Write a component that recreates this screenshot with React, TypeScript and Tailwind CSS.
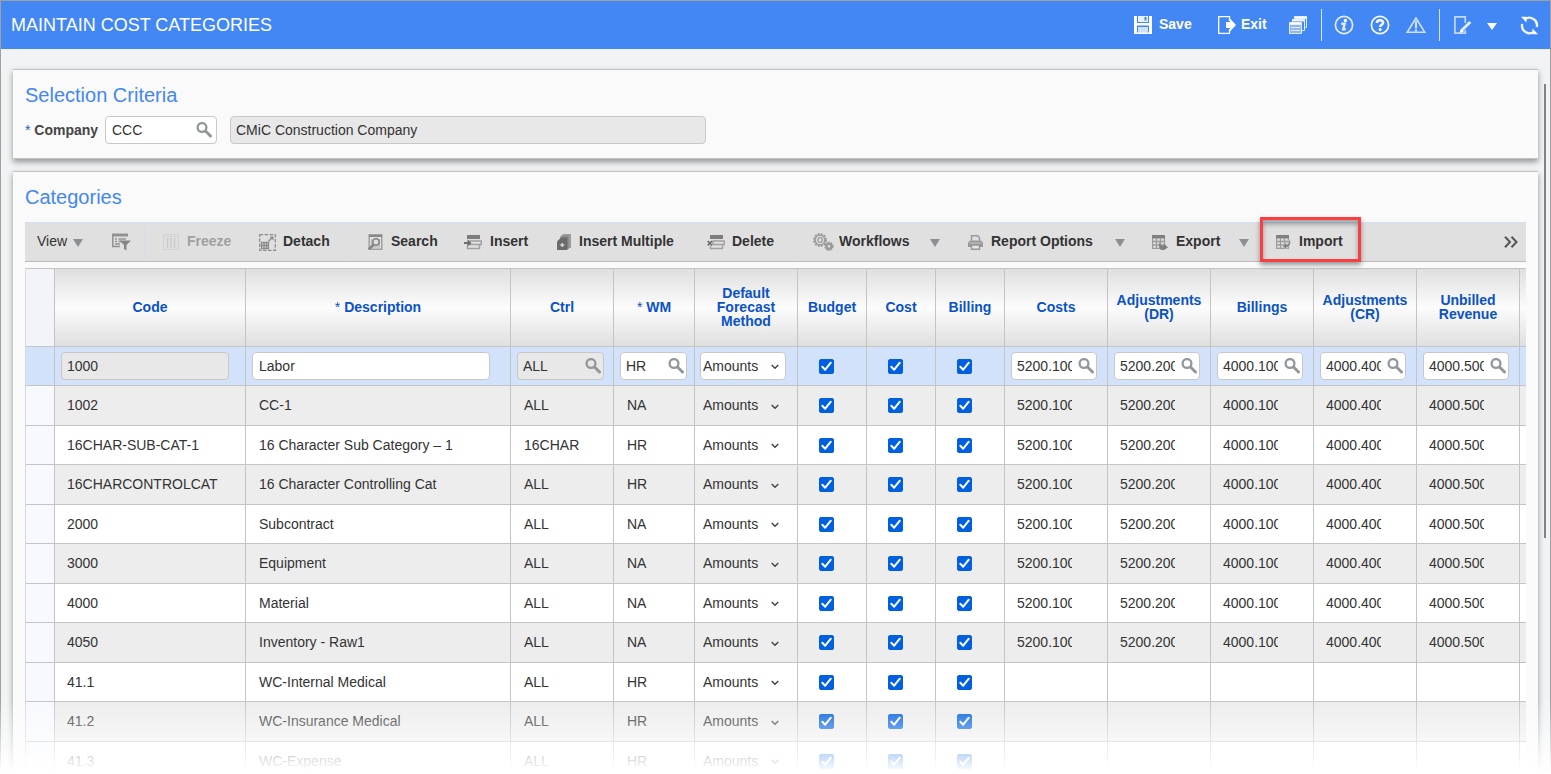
import type { ReactNode } from "react";
import clsx from "clsx";

type Row = {
  code: string;
  description: string;
  ctrl: string;
  wm: string;
  accounts: string[];
};

const ACCOUNTS = ["5200.100", "5200.200", "4000.100", "4000.400", "4000.500"];
const EMPTY = ["", "", "", "", ""];

const rows: Row[] = [
  { code: "1000", description: "Labor", ctrl: "ALL", wm: "HR", accounts: ACCOUNTS },
  { code: "1002", description: "CC-1", ctrl: "ALL", wm: "NA", accounts: ACCOUNTS },
  { code: "16CHAR-SUB-CAT-1", description: "16 Character Sub Category – 1", ctrl: "16CHAR", wm: "HR", accounts: ACCOUNTS },
  { code: "16CHARCONTROLCAT", description: "16 Character Controlling Cat", ctrl: "ALL", wm: "HR", accounts: ACCOUNTS },
  { code: "2000", description: "Subcontract", ctrl: "ALL", wm: "NA", accounts: ACCOUNTS },
  { code: "3000", description: "Equipment", ctrl: "ALL", wm: "NA", accounts: ACCOUNTS },
  { code: "4000", description: "Material", ctrl: "ALL", wm: "NA", accounts: ACCOUNTS },
  { code: "4050", description: "Inventory - Raw1", ctrl: "ALL", wm: "NA", accounts: ACCOUNTS },
  { code: "41.1", description: "WC-Internal Medical", ctrl: "ALL", wm: "HR", accounts: EMPTY },
  { code: "41.2", description: "WC-Insurance Medical", ctrl: "ALL", wm: "HR", accounts: EMPTY },
  { code: "41.3", description: "WC-Expense", ctrl: "ALL", wm: "HR", accounts: EMPTY },
];

const columns = [
  { label: "Code", width: "w-[191px]" },
  { label: "Description", width: "w-[265px]", required: true },
  { label: "Ctrl", width: "w-[103px]" },
  { label: "WM", width: "w-[81px]", required: true },
  { label: "Default Forecast Method", width: "w-[103px]" },
  { label: "Budget", width: "w-[69px]" },
  { label: "Cost", width: "w-[69px]" },
  { label: "Billing", width: "w-[69px]" },
  { label: "Costs", width: "w-[103px]" },
  { label: "Adjustments (DR)", width: "w-[103px]" },
  { label: "Billings", width: "w-[103px]" },
  { label: "Adjustments (CR)", width: "w-[103px]" },
  { label: "Unbilled Revenue", width: "w-[103px]" },
];

function SearchIcon() {
  return (
    <svg width="16" height="16" viewBox="0 0 16 16" fill="none" stroke="#92979b">
      <circle cx="6" cy="5.5" r="4.4" strokeWidth="2.3" />
      <path d="M9.5 9l5 5" strokeWidth="3" strokeLinecap="round" />
    </svg>
  );
}

function DownArrow() {
  return (
    <svg width="10" height="8" viewBox="0 0 10 8">
      <path d="M0 0h10L5 8z" fill="#8b9095" />
    </svg>
  );
}

/* Header icons */

function SaveIcon() {
  return (
    <svg width="18" height="18" viewBox="0 0 18 18">
      <path fill="#fff" d="M0 0h3v7h12V0h3v18h-3V9.500H3V18H0z" />
      <path fill="#e9f1fe" d="M4 0h10v6H4z" />
      <path fill="#4387f4" d="M10.500 1h2v3.500h-2z" />
      <path fill="#cfe0fc" d="M4 11h10v6H4z" />
      <path fill="#fff" d="M3 16.500h12V18H3z" />
    </svg>
  );
}

function ExitIcon() {
  return (
    <svg width="18" height="18" viewBox="0 0 18 18">
      <path d="M11.500 5V.7H.7v16.600h10.800V13" fill="none" stroke="#fff" strokeWidth="1.300" />
      <path d="M8 6h4V2.500L18 9l-6 6.500V12H8z" fill="#fff" />
    </svg>
  );
}

function WindowsIcon() {
  return (
    <svg width="18" height="18" viewBox="0 0 18 18">
      <g stroke="#e3edfe" fill="#4387f4">
        <path d="M5.500.500h12v11h-12z" />
        <path fill="#fff" d="M5.500.500h12v2h-12z" />
        <path d="M3.500 3.500h12v11h-12z" />
        <path fill="#fff" d="M3.500 3.500h12v1.500h-12z" />
        <path d="M.5 7.500h12v10H.5z" fill="#8db7f9" />
        <path fill="#fff" d="M.5 6.500h12v2H.5z" />
        <path d="M2 11.500h9M2 14.500h9" />
      </g>
    </svg>
  );
}

function InfoIcon() {
  return (
    <svg width="20" height="20" viewBox="0 0 20 20" fill="none" stroke="#e3edfe">
      <circle cx="10" cy="10" r="8.600" strokeWidth="1.700" />
      <circle cx="11.400" cy="5.500" r="1.700" fill="#fff" stroke="none" />
      <path d="M7.300 8.700h3.400L9.200 14.300h2.600" strokeWidth="2.400" />
    </svg>
  );
}

function HelpIcon() {
  return (
    <svg width="20" height="20" viewBox="0 0 20 20" fill="none" stroke="#f4f8ff">
      <circle cx="10" cy="10" r="8.600" strokeWidth="1.700" />
      <path d="M6.900 8c0-3.600 6.200-3.600 6.200-.3 0 2-3 2-3 4.300" strokeWidth="2.500" />
      <circle cx="10.100" cy="14.500" r="1.500" fill="#fff" stroke="none" />
    </svg>
  );
}

function WarningIcon() {
  return (
    <svg width="20" height="18" viewBox="0 0 20 18" fill="none" stroke="#cfe0fc">
      <path d="M10 2L1.300 16.200h17.400z" strokeWidth="1.600" />
      <path d="M10 5v7.500M10 13.500v2" strokeWidth="2.200" />
    </svg>
  );
}

function EditPageIcon() {
  return (
    <svg width="18" height="18" viewBox="0 0 18 18" fill="none" stroke="#c3d9fb">
      <path d="M11.300 7V.9H.9v16.200h10.400V14" strokeWidth="1.700" />
      <path d="M16.300 6L8.300 13.800" stroke="#e3edfe" strokeWidth="2.800" />
      <path d="M7 12.500l-1.500 4.500 4.500-1.500z" fill="#fff" stroke="none" />
    </svg>
  );
}

function RefreshIcon() {
  return (
    <svg width="19" height="19" viewBox="0 0 19 19" fill="none" stroke="#f1f6ff" strokeWidth="2.300">
      <path d="M4.800 3.300A7.600 7.600 0 0 1 16.800 11" />
      <path d="M14.200 15.700A7.600 7.600 0 0 1 2.200 8" />
      <path d="M1 .800h5.500v5.700zM18 18.200h-5.500v-5.700z" fill="#fff" stroke="none" />
    </svg>
  );
}

/* Toolbar icons */

function FilterIcon() {
  return (
    <svg width="19" height="18" viewBox="0 0 19 18" fill="none" stroke="#929292">
      <path d="M0 2h16" strokeWidth="3" />
      <path d="M.8 3v10.500H8M3 6h2M6.500 6H14M3 8.500h2M6.500 8.500H9M3 11h5" strokeWidth="1.500" />
      <path d="M7.500 7.500H19l-4.500 4.500v5.500L12 16v-4z" fill="#868686" stroke="none" />
    </svg>
  );
}

function FreezeIcon() {
  return (
    <svg width="16" height="16" viewBox="0 0 16 16" fill="none" stroke="#d2d2d2">
      <path d="M.5.500h15v15H.5zM.5 2.500h15" />
      <path d="M4.500 4v10M8 4v10M11.500 4v10" stroke="#cacaca" strokeWidth="1.500" />
    </svg>
  );
}

function DetachIcon() {
  return (
    <svg width="17" height="17" viewBox="0 0 17 17" fill="none" stroke="#8a8a8a">
      <path d="M.7.7h15.600v15.600H.7z" strokeDasharray="3.500 1.500" strokeWidth="1.200" />
      <path d="M2.500 8.500h7v6h-7zM2.500 11.500h7M5 9v5.500M7.500 9v5.500" strokeWidth="1.300" />
      <path d="M9.500 7.200l3.500-3.500" strokeWidth="1.500" />
      <path d="M10.500 2.500h4v4z" fill="#8a8a8a" stroke="none" />
    </svg>
  );
}

function SearchPageIcon() {
  return (
    <svg width="15" height="16" viewBox="0 0 15 16" fill="none" stroke="#858585">
      <path d="M1.200.800h12.600v14.400H1.200z" stroke="#a0a0a0" strokeWidth="1.500" />
      <path d="M1 2h13" stroke="#888" strokeWidth="2" />
      <path d="M3.500 5v8h8V5" stroke="#b5b5b5" />
      <circle cx="8" cy="8" r="3.200" strokeWidth="1.500" />
      <path d="M5.800 10.500L.8 15.300" strokeWidth="2.500" />
    </svg>
  );
}

function InsertIcon() {
  return (
    <svg width="18" height="16" viewBox="0 0 18 16" fill="none" stroke="#a0a0a0">
      <path d="M3 1h13v4H3z" fill="#7d7d7d" stroke="none" />
      <path d="M5 7h12.300v3.500H5zM3.500 11v3.500h12V11" strokeWidth="1.400" />
      <path d="M0 9h5" stroke="#6c6c6c" strokeWidth="2" />
      <path d="M3.500 5.500L7.500 9l-4 3.500z" fill="#6c6c6c" stroke="none" />
    </svg>
  );
}

function InsertMultipleIcon() {
  return (
    <svg width="14" height="16" viewBox="0 0 14 16">
      <path d="M6 0h8v14h-2V2H5z" fill="#9c9c9c" />
      <path d="M4 1.500h8V15H9V4H3z" fill="#8d8d8d" />
      <path d="M4 3.500h6.500V16H0V7.500z" fill="#6b6b6b" />
      <path d="M5.300 9v4M3.300 11h4" stroke="#d6d6d6" strokeWidth="1.500" />
    </svg>
  );
}

function DeleteIcon() {
  return (
    <svg width="18" height="16" viewBox="0 0 18 16" fill="none" stroke="#a0a0a0">
      <path d="M3 1h13v4H3z" fill="#7d7d7d" stroke="none" />
      <path d="M6 7h11.300v3.500H6zM3.500 12v2.500h12V11" strokeWidth="1.400" />
      <path d="M.7 7l4.300 4.500M5 7L.7 11.500" stroke="#6c6c6c" strokeWidth="1.700" />
    </svg>
  );
}

function GearsIcon() {
  return (
    <svg width="21" height="18" viewBox="0 0 21 18" fill="none" stroke="#979797">
      <circle cx="7" cy="7" r="6" strokeWidth="1.800" strokeDasharray="2 1.140" />
      <circle cx="7" cy="7" r="4.800" strokeWidth="1.200" />
      <circle cx="7" cy="7" r="2.300" strokeWidth="1.300" />
      <circle cx="16" cy="13.300" r="3.900" strokeWidth="1.500" strokeDasharray="1.700 .750" />
      <circle cx="16" cy="13.300" r="2.400" strokeWidth="2" />
    </svg>
  );
}

function PrinterIcon() {
  return (
    <svg width="15" height="15" viewBox="0 0 15 15" fill="none" stroke="#979797">
      <path d="M3.500 5.500V.700h6l2 2v2.800" strokeWidth="1.400" />
      <path d="M2 5.500h11l2 2V12H0V7.500z" fill="#979797" stroke="none" />
      <path d="M1.500 8h12" stroke="#c8c8c8" />
      <path d="M3.500 10h8v4.300h-8z" fill="#e6e6e6" strokeWidth="1.400" />
    </svg>
  );
}

function SheetGrid() {
  return (
    <>
      <path d="M0 0h13v3.500H0z" fill="#808080" stroke="none" />
      <path d="M.6 3v10.400h11.800V3M.6 6.500h11.800M.6 10h11.800M4.500 3v10M8.500 3v10" stroke="#9c9c9c" strokeWidth="1.300" />
    </>
  );
}

function ExportIcon() {
  return (
    <svg width="16" height="15" viewBox="0 0 16 15" fill="none">
      <SheetGrid />
      <path d="M7.500 7c.5 3 2 3.500 4.500 3.500V8.500l4 4-4 2.500h-3c-2-1.500-2.500-4-1.500-8z" fill="#7f7f7f" />
    </svg>
  );
}

function ImportIcon() {
  return (
    <svg width="15" height="15" viewBox="0 0 15 15" fill="none">
      <SheetGrid />
      <path d="M14.500 5.500c0 5-1.500 6.500-4 6.500v2.500L6.500 11l4-3.500v2c2 0 2.500-1 2-4z" fill="#7f7f7f" stroke="#dedede" strokeWidth="0.500" />
    </svg>
  );
}

function ToolButton({ icon, label, className, disabled }: { icon: ReactNode; label: string; className?: string; disabled?: boolean }) {
  return (
    <button
      type="button"
      disabled={disabled}
      className={clsx("flex h-8 shrink-0 items-center whitespace-nowrap font-bold", disabled ? "text-[#a0a0a0]" : "text-[#333]", className ?? "gap-2")}
    >
      {icon}
      <span className="pb-0.5">{label}</span>
    </button>
  );
}

function ArrowButton({ label, className }: { label: string; className?: string }) {
  return (
    <button type="button" aria-label={label} className={clsx("flex h-8 shrink-0 items-center pt-0.5", className)}>
      <DownArrow />
    </button>
  );
}

function Header() {
  return (
    <header className="flex h-12 items-center justify-between bg-[#4387f4] pl-[10px] pr-[11px] text-white">
      <h1 className="whitespace-nowrap text-[18px]">MAINTAIN COST CATEGORIES</h1>
      <div className="flex shrink-0 items-center text-[14px] font-bold">
        <button type="button" className="flex w-[84px] items-center gap-[7px]">
          <SaveIcon />
          <span className="pb-0.5">Save</span>
        </button>
        <button type="button" className="flex w-[71px] items-center gap-[5px]">
          <ExitIcon />
          <span className="pb-0.5">Exit</span>
        </button>
        <button type="button" aria-label="Windows" className="w-8">
          <WindowsIcon />
        </button>
        <div className="flex h-8 items-center border-l border-[#d5e3fc] pl-3">
          <button type="button" aria-label="Information" className="w-9">
            <InfoIcon />
          </button>
          <button type="button" aria-label="Help" className="w-9">
            <HelpIcon />
          </button>
          <button type="button" aria-label="Warnings" className="w-[33px]">
            <WarningIcon />
          </button>
        </div>
        <div className="flex h-8 items-center border-l border-[#d5e3fc] pl-[14px]">
          <button type="button" aria-label="Edit page" className="w-[33px]">
            <EditPageIcon />
          </button>
          <button type="button" aria-label="More edit options" className="w-[33px] pt-0.5">
            <svg width="10" height="7" viewBox="0 0 10 7">
              <path d="M0 0h10L5 7z" fill="#fff" />
            </svg>
          </button>
          <button type="button" aria-label="Refresh">
            <RefreshIcon />
          </button>
        </div>
      </div>
    </header>
  );
}

function Card({ title, children, className }: { title: string; children: ReactNode; className?: string }) {
  return (
    <section className={clsx("mx-3 border-y border-[#c2c3c5] bg-[#fafafa] px-3 pt-[11px] shadow-[0_3px_6px_rgba(0,0,0,0.4)]", className)}>
      <h2 className="text-[20px] leading-7 text-[#4387f4]">{title}</h2>
      {children}
    </section>
  );
}

function Toolbar() {
  return (
    <div className="mt-[11px] flex h-10 items-center border-b border-t border-b-[#bcbcbc] border-t-[#d0e0f7] bg-[#e0e0e0] pl-3">
      <button type="button" className="flex h-8 w-[61px] shrink-0 items-center gap-1.5 border-r border-[#dae0e8] text-[#333]">
        <span className="pb-0.5">View</span>
        <span className="pt-0.5">
          <DownArrow />
        </span>
      </button>
      <button type="button" aria-label="Filter" className="flex h-8 w-[47px] shrink-0 items-center border-r border-[#cfdff0] pl-[14px]">
        <FilterIcon />
      </button>
      <ToolButton icon={<FreezeIcon />} label="Freeze" disabled className="ml-[18px] w-24 gap-2" />
      <ToolButton icon={<DetachIcon />} label="Detach" className="w-[90px] gap-[7px] border-r border-[#d6dfea]" />
      <ToolButton icon={<SearchPageIcon />} label="Search" className="ml-[19px] w-24 gap-2" />
      <ToolButton icon={<InsertIcon />} label="Insert" className="w-[93px] gap-2" />
      <ToolButton icon={<InsertMultipleIcon />} label="Insert Multiple" className="w-[150px] gap-2" />
      <ToolButton icon={<DeleteIcon />} label="Delete" className="w-[89px] gap-[7px] border-r border-[#d6dfea]" />
      <ToolButton icon={<GearsIcon />} label="Workflows" className="ml-[17px] w-[117px] gap-[5px]" />
      <ArrowButton label="Workflows menu" className="w-[38px]" />
      <ToolButton icon={<PrinterIcon />} label="Report Options" className="w-[147px] gap-2" />
      <ArrowButton label="Report options menu" className="w-[37px]" />
      <ToolButton icon={<ExportIcon />} label="Export" className="w-[87px] gap-2" />
      <ArrowButton label="Export menu" className="w-[21px]" />
      <div className="relative flex h-8 w-[101px] shrink-0 items-center pl-4">
        <ToolButton icon={<ImportIcon />} label="Import" />
        <span className="pointer-events-none absolute inset-x-0 -top-[9px] h-[45px] border-3 border-[#fa3f43] shadow-[0_3px_5px_rgba(0,0,0,0.4),inset_0_4px_5px_rgba(0,0,0,0.35)]" />
      </div>
      <button type="button" aria-label="More tools" className="ml-auto mr-2">
        <svg width="14" height="12" viewBox="0 0 14 12" fill="none" stroke="#555" strokeWidth="2">
          <path d="M1 .800L6 6l-5 5.200M7.500.800l5 5.200-5 5.200" />
        </svg>
      </button>
    </div>
  );
}

function Lookup({ value, label, readOnly, clip }: { value: string; label: string; readOnly?: boolean; clip?: boolean }) {
  return (
    <div className={clsx("flex h-7 items-center justify-between rounded border border-[#c8c8c8] pl-[5px] pr-0.5", readOnly ? "bg-[#e8e8e8]" : "bg-white")}>
      <input
        type="text"
        aria-label={label}
        defaultValue={value}
        readOnly={readOnly}
        className={clsx("min-w-0 outline-none", clip ? "w-[55px]" : "w-0 flex-1")}
      />
      <button type="button" aria-label={`Look up ${label}`} className="shrink-0">
        <SearchIcon />
      </button>
    </div>
  );
}

function MethodSelect({ active, label }: { active: boolean; label: string }) {
  return (
    <div className="relative ml-[5px] w-[86px]">
      <select
        aria-label={label}
        defaultValue="Amounts"
        className={clsx("h-7 w-full appearance-none rounded border pl-0.5 outline-none", active ? "border-[#c8c8c8] bg-white" : "border-transparent")}
      >
        <option>Amounts</option>
        <option>Units</option>
      </select>
      <svg className="pointer-events-none absolute right-[7px] top-3" width="8" height="6" viewBox="0 0 8 6" fill="none" stroke="#444" strokeWidth="1.400">
        <path d="M.7.900L4 4.300 7.300.900" />
      </svg>
    </div>
  );
}

function Check({ label }: { label: string }) {
  return (
    <div className="ml-[21px] grid size-[15px]">
      <input type="checkbox" defaultChecked aria-label={label} className="peer col-start-1 row-start-1 size-[15px] appearance-none rounded-xs border border-[#8f8f9d] bg-white checked:border-[#0060df] checked:bg-[#0060df]" />
      <svg className="pointer-events-none invisible col-start-1 row-start-1 peer-checked:visible" width="15" height="15" viewBox="0 0 15 15" fill="none" stroke="#fff" strokeWidth="2">
        <path d="M3.300 7.800l2.900 2.900 5.600-7" strokeLinecap="round" strokeLinejoin="round" />
      </svg>
    </div>
  );
}

function CategoryRow({ row, active }: { row: Row; active: boolean }) {
  const cell = "overflow-hidden whitespace-nowrap border-b border-r border-[#c4c4c4] p-0";
  return (
    <tr className={clsx("odd:h-[39px] even:h-10", active ? "bg-[#d3e2fb]" : "odd:bg-white even:bg-[#ededed]")}>
      <td className={clsx(cell, "border-l border-l-[#d3dbe3]", !active && "bg-[#f7f9fe]")} />
      <td className={cell}>
        {active ? (
          <input type="text" aria-label="Code" readOnly defaultValue={row.code} className="ml-[6px] block h-7 w-[168px] rounded border border-[#c8c8c8] bg-[#e8e8e8] px-[5px] outline-none" />
        ) : (
          <span className="pl-3">{row.code}</span>
        )}
      </td>
      <td className={cell}>
        {active ? (
          <input type="text" aria-label="Description" defaultValue={row.description} className="ml-[6px] block h-7 w-[238px] rounded border border-[#c8c8c8] bg-white px-[6px] outline-none" />
        ) : (
          <span className="pl-[13px]">{row.description}</span>
        )}
      </td>
      <td className={cell}>
        {active ? (
          <div className="ml-[6px] w-[87px]">
            <Lookup label="Ctrl" value={row.ctrl} readOnly />
          </div>
        ) : (
          <span className="pl-[13px]">{row.ctrl}</span>
        )}
      </td>
      <td className={cell}>
        {active ? (
          <div className="ml-[6px] w-[67px]">
            <Lookup label="WM" value={row.wm} />
          </div>
        ) : (
          <span className="pl-[13px]">{row.wm}</span>
        )}
      </td>
      <td className={cell}>
        <MethodSelect active={active} label={`Default forecast method for ${row.code}`} />
      </td>
      {["Budget", "Cost", "Billing"].map((name) => (
        <td key={name} className={cell}>
          <Check label={`${name} for ${row.code}`} />
        </td>
      ))}
      {row.accounts.map((account, i) => (
        <td key={i} className={cell}>
          {active ? (
            <div className="ml-[6px] w-[86px]">
              <Lookup label={columns[8 + i].label} value={account} clip />
            </div>
          ) : (
            <span className="ml-3 block w-[55px] overflow-hidden">{account}</span>
          )}
        </td>
      ))}
      <td className="border-b border-[#c4c4c4] p-0" />
    </tr>
  );
}

function CategoryTable() {
  const head = "border-y border-r border-[#c4c4c4]";
  const shade = "bg-linear-to-b from-[#dfdfdf] via-[#fcfcfc] to-[#dfdfdf]";
  return (
    <div className="mt-1.5 overflow-hidden">
      <table className="w-full table-fixed border-separate border-spacing-0 text-[#333]">
        <thead>
          <tr className="h-[79px]">
            <th className={clsx(head, "w-[30px] border-l border-l-[#d3dbe3] bg-[#f2f4f9]")} />
            {columns.map((col) => (
              <th key={col.label} scope="col" className={clsx(head, shade, col.width, "px-1 pb-0.5 text-center leading-[14px] text-[#0b52c4]")}>
                {col.required && <span className="font-normal">* </span>}
                {col.label}
              </th>
            ))}
            <th className={clsx("border-y border-[#c4c4c4]", shade)} />
          </tr>
        </thead>
        <tbody>
          {rows.map((row, i) => (
            <CategoryRow key={row.code} row={row} active={i === 0} />
          ))}
        </tbody>
      </table>
    </div>
  );
}

export default function App() {
  return (
    <div className="relative h-screen overflow-hidden font-['Liberation_Sans',Arial,sans-serif] text-[14px]">
      <div className="h-full overflow-hidden border-x border-t border-[#a0a0a0] bg-[#f1f3f5]">
        <Header />
        <main>
          <Card title="Selection Criteria" className="mt-5 pb-[14px]">
            <div className="mt-[7px] flex items-center">
              <label htmlFor="company" className="w-20 shrink-0 font-bold text-[#444]">
                <span className="font-normal text-[#1a5fd0]">* </span>
                Company
              </label>
              <div className="flex h-7 w-28 shrink-0 items-center rounded border border-[#c8c8c8] bg-white pl-[6px] pr-1">
                <input id="company" type="text" defaultValue="CCC" className="w-0 min-w-0 flex-1 text-[#333] outline-none" />
                <button type="button" aria-label="Look up company">
                  <SearchIcon />
                </button>
              </div>
              <input type="text" aria-label="Company name" readOnly defaultValue="CMiC Construction Company" className="ml-[13px] h-7 w-[476px] rounded border border-[#c8c8c8] bg-[#e8e8e8] px-[5px] text-[#333] outline-none" />
            </div>
          </Card>
          <Card title="Categories" className="mt-3">
            <Toolbar />
            <CategoryTable />
          </Card>
        </main>
      </div>
      <div className="absolute right-[5px] top-[84px] h-[454px] w-0.5 bg-[#808285]" />
      <div className="pointer-events-none absolute inset-x-0 bottom-0 h-[74px] bg-linear-to-b from-white/0 to-white to-97%" />
    </div>
  );
}
